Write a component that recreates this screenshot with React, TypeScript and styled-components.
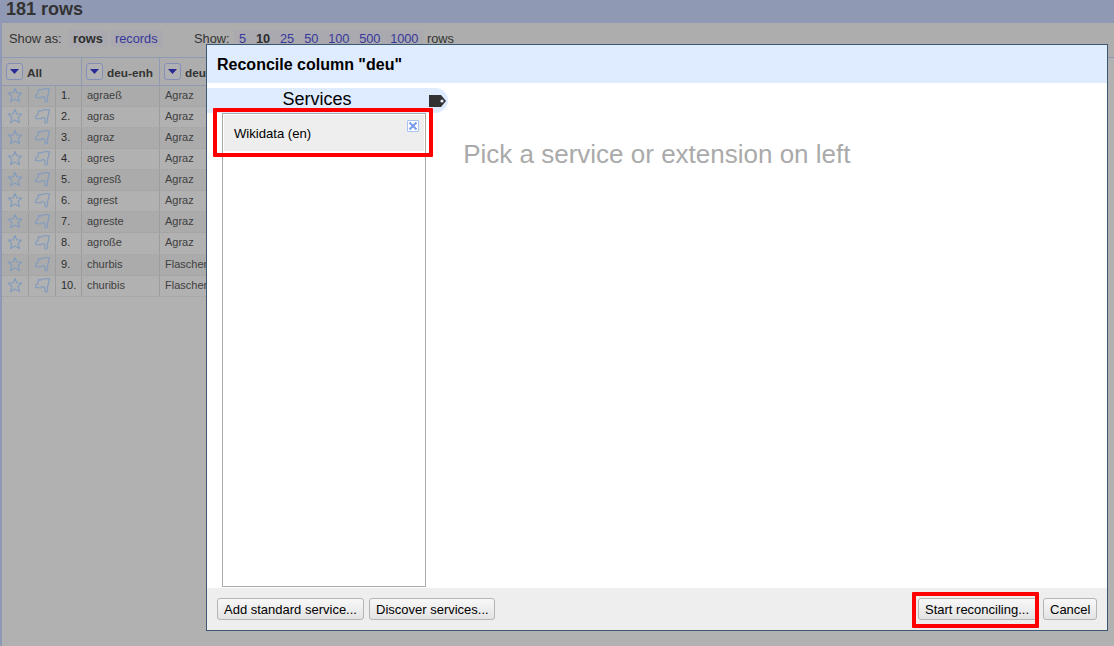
import React from "react";
import styled, { createGlobalStyle } from "styled-components";

const Global = createGlobalStyle`
  * { box-sizing: border-box; }
  body { margin: 0; background: #b1b1b1; overflow: hidden; font-family: "Liberation Sans", Arial, sans-serif; }
`;

const Page = styled.div`
  position: relative;
  height: 646px;
  background: #b1b1b1;
  border-left: 2px solid #8f99b5;
  overflow: hidden;
`;
const Summary = styled.header`
  height: 23px;
  margin-left: -2px;
  padding-left: 6px;
  background: #8f99b3;
  color: #333;
  font-size: 18px;
  font-weight: bold;
  line-height: 18px;
`;
const Controls = styled.div`
  display: flex;
  height: 34px;
  padding: 6px 0 0 7px;
  background: #adadad;
  color: #333;
  font-size: 12.8px;
  line-height: 20px;
  white-space: nowrap;
`;
const ControlGroup = styled.div<{ $width?: number }>`
  display: flex;
  width: ${(p) => (p.$width ? `${p.$width}px` : "auto")};
`;
const ControlLabel = styled.span<{ $width: number }>`
  width: ${(p) => p.$width}px;
`;
const Choice = styled.span<{ $selected?: boolean; $compact?: boolean }>`
  height: 17px;
  margin: 1px ${(p) => (p.$compact ? 0 : 2)}px 0 0;
  padding: 0 5px;
  line-height: 18px;
  letter-spacing: ${(p) => (p.$compact ? "-0.1px" : "0")};
  border-radius: 3px;
  background: #a9a9af;
  color: ${(p) => (p.$selected ? "#2e2e2e" : "#38389c")};
  font-weight: ${(p) => (p.$selected ? "bold" : "normal")};
`;

const Grid = styled.div`
  border-top: 1px solid #8f99b3;
`;
const Table = styled.div`
  width: 420px;
`;
const HeadRow = styled.div`
  display: grid;
  grid-template-columns: 80px 78px 1fr;
  height: 28px;
  background: #adadad;
  border-bottom: 1px solid #8f99b3;
`;
const HeadCell = styled.div`
  display: flex;
  padding: 5px 0 0 4px;
  border-right: 1px solid #8f99b3;
  color: #333;
  font-size: 11.8px;
  font-weight: bold;
  line-height: 21px;
  white-space: nowrap;
`;
const MenuButton = styled.span`
  display: flex;
  align-items: center;
  justify-content: center;
  flex: none;
  width: 17px;
  height: 17px;
  margin-right: 4px;
  border: 1px solid #838fb7;
  border-radius: 3px;
  background: #b1b1b3;
`;
const Row = styled.div<{ $odd: boolean; $tall: boolean }>`
  display: grid;
  grid-template-columns: 27px 27px 26px 78px 1fr;
  height: ${(p) => (p.$tall ? 22 : 21)}px;
  background: ${(p) => (p.$odd ? "#ababab" : "#b1b1b1")};
  border-bottom: 1px dotted #a0a0a0;
`;
const Cell = styled.div<{ $index?: boolean }>`
  padding-left: 5px;
  border-right: 1px solid #9d9d9d;
  color: ${(p) => (p.$index ? "#2c2c2c" : "#404040")};
  font-size: 11px;
  line-height: 19px;
  white-space: nowrap;
`;
const IconCell = styled(Cell)`
  padding: 0 0 0 5px;
  line-height: 0;
`;

const Dialog = styled.section`
  position: absolute;
  left: 204px;
  top: 44px;
  width: 902px;
  height: 587px;
  display: flex;
  flex-direction: column;
  background: #fff;
  border: 1px solid #3a5774;
  color: #000;
`;
const DialogTitle = styled.h1`
  height: 38px;
  margin: 0 0 5px;
  padding-left: 10px;
  background: #dfebfe;
  font-size: 16px;
  line-height: 39px;
`;
const DialogBody = styled.div`
  display: flex;
  flex: 1;
  min-height: 0;
`;
const ServicePanel = styled.aside`
  width: 241px;
  display: flex;
  flex-direction: column;
`;
const ServiceHeading = styled.div`
  display: flex;
  height: 25px;
  border-radius: 0 13px 13px 0;
  background: #dfebfe;
  font-size: 18px;
  line-height: 22px;
`;
const HeadingText = styled.span`
  width: 222px;
  padding-left: 75.5px;
`;
const ServiceList = styled.div`
  width: 204px;
  height: 474px;
  margin-left: 15px;
  padding: 1px;
  border: 1px solid #aaa;
`;
const Service = styled.div`
  display: flex;
  justify-content: space-between;
  height: 36px;
  padding: 0 5px 0 10px;
  background: #eee;
  font-size: 13.1px;
  line-height: 38px;
`;
const Close = styled.span`
  display: flex;
  width: 12px;
  height: 12px;
  margin-top: 5px;
  border: 1px solid #a9c2f2;
  border-radius: 1px;
  background: #fff;
`;
const Prompt = styled.p`
  margin: 50px 0 0 15.2px;
  color: #aaa;
  font-size: 26px;
  line-height: 32px;
`;
const Footer = styled.footer`
  display: flex;
  height: 42px;
  padding: 10px 10px 0;
  gap: 5px;
  background: #eee;
`;
const Button = styled.button<{ $width: number; $right?: boolean }>`
  width: ${(p) => p.$width}px;
  height: 22px;
  margin-left: ${(p) => (p.$right ? "auto" : "0")};
  padding: 1px 0 0 6px;
  text-align: left;
  border: 1px solid #b5b5b5;
  border-radius: 3px;
  background: linear-gradient(#f8f8f8, #e3e3e3);
  color: #000;
  font: 13px "Liberation Sans", Arial, sans-serif;
  line-height: 20px;
  white-space: nowrap;
`;
const Highlight = styled.div<{ $x: number; $y: number; $w: number; $h: number }>`
  position: absolute;
  left: ${(p) => p.$x}px;
  top: ${(p) => p.$y}px;
  width: ${(p) => p.$w}px;
  height: ${(p) => p.$h}px;
  border: 4px solid #f00;
  border-radius: 1px;
`;

const Star = () => (
  <svg width="16" height="19" viewBox="0 0 16 19" fill="none" stroke="#839cbd" strokeWidth="1.2" strokeLinejoin="round">
    <path d="M8 2.5 9.9 7H14.6L11.2 10.4 12.4 15.6 8 13 3.6 15.6 4.8 10.4 1.4 7H6.1Z" />
  </svg>
);
const Flag = () => (
  <svg width="18" height="19" viewBox="0 0 18 19" fill="none" stroke="#839cbd" strokeWidth="1.2" strokeLinejoin="round">
    <path d="M4.5 3.5Q7 4.6 9.2 3 11 2.4 15.3 2.8L14.5 7.5 13.5 10.5V15Q12.4 16.6 11 15.5V12Q10.6 10.2 8.2 10.6L6.5 12 1.6 11.4 2.2 8.4 4 7.4Z" />
  </svg>
);
const Menu = () => (
  <MenuButton>
    <svg width="11" height="7" viewBox="0 0 11 7"><path d="M1 1h9L5.5 6Z" fill="#292996" /></svg>
  </MenuButton>
);

const rows = [
  ["agraeß", "Agraz"], ["agras", "Agraz"], ["agraz", "Agraz"], ["agres", "Agraz"],
  ["agresß", "Agraz"], ["agrest", "Agraz"], ["agreste", "Agraz"], ["agroße", "Agraz"],
  ["churbis", "Flaschenkürbis"], ["churibis", "Flaschenkürbis"],
];
const sizes = ["5", "10", "25", "50", "100", "500", "1000"];

export default function App() {
  return (
    <Page>
      <Global />
      <Summary>181 rows</Summary>
      <Controls>
        <ControlGroup $width={185}>
          <ControlLabel $width={59}>Show as:</ControlLabel>
          <Choice $selected>rows</Choice>
          <Choice>records</Choice>
        </ControlGroup>
        <ControlGroup>
          <ControlLabel $width={40}>Show:</ControlLabel>
          {sizes.map((s) => <Choice key={s} $selected={s === "10"} $compact>{s}</Choice>)}
          <span>&nbsp;rows</span>
        </ControlGroup>
      </Controls>
      <Grid>
        <Table>
          <HeadRow>
            <HeadCell><Menu />All</HeadCell>
            <HeadCell><Menu />deu-enh</HeadCell>
            <HeadCell><Menu />deu</HeadCell>
          </HeadRow>
          {rows.map(([source, target], i) => (
            <Row key={i} $odd={i % 2 === 0} $tall={i === 7}>
              <IconCell><Star /></IconCell>
              <IconCell><Flag /></IconCell>
              <Cell $index>{i + 1}.</Cell>
              <Cell>{source}</Cell>
              <Cell>{target}</Cell>
            </Row>
          ))}
        </Table>
      </Grid>
      <Dialog>
        <DialogTitle>Reconcile column "deu"</DialogTitle>
        <DialogBody>
          <ServicePanel>
            <ServiceHeading>
              <HeadingText>Services</HeadingText>
              <svg width="18" height="25" viewBox="0 0 18 25">
                <path d="M0 7H12L17 13 12 19H0Z" fill="#333" />
                <circle cx="13" cy="13" r="1.6" fill="#dfebfe" />
              </svg>
            </ServiceHeading>
            <ServiceList>
              <Service>
                Wikidata (en)
                <Close>
                  <svg width="10" height="10" viewBox="0 0 10 10" stroke="#769be8" strokeWidth="2">
                    <path d="m1.5 1.5 7 7m0-7-7 7" />
                  </svg>
                </Close>
              </Service>
            </ServiceList>
          </ServicePanel>
          <Prompt>Pick a service or extension on left</Prompt>
        </DialogBody>
        <Footer>
          <Button $width={147}>Add standard service...</Button>
          <Button $width={126}>Discover services...</Button>
          <Button $width={120} $right>Start reconciling...</Button>
          <Button $width={54}>Cancel</Button>
        </Footer>
      </Dialog>
      <Highlight $x={211} $y={108} $w={220} $h={49} />
      <Highlight $x={910} $y={592} $w={127} $h={36} />
    </Page>
  );
}
